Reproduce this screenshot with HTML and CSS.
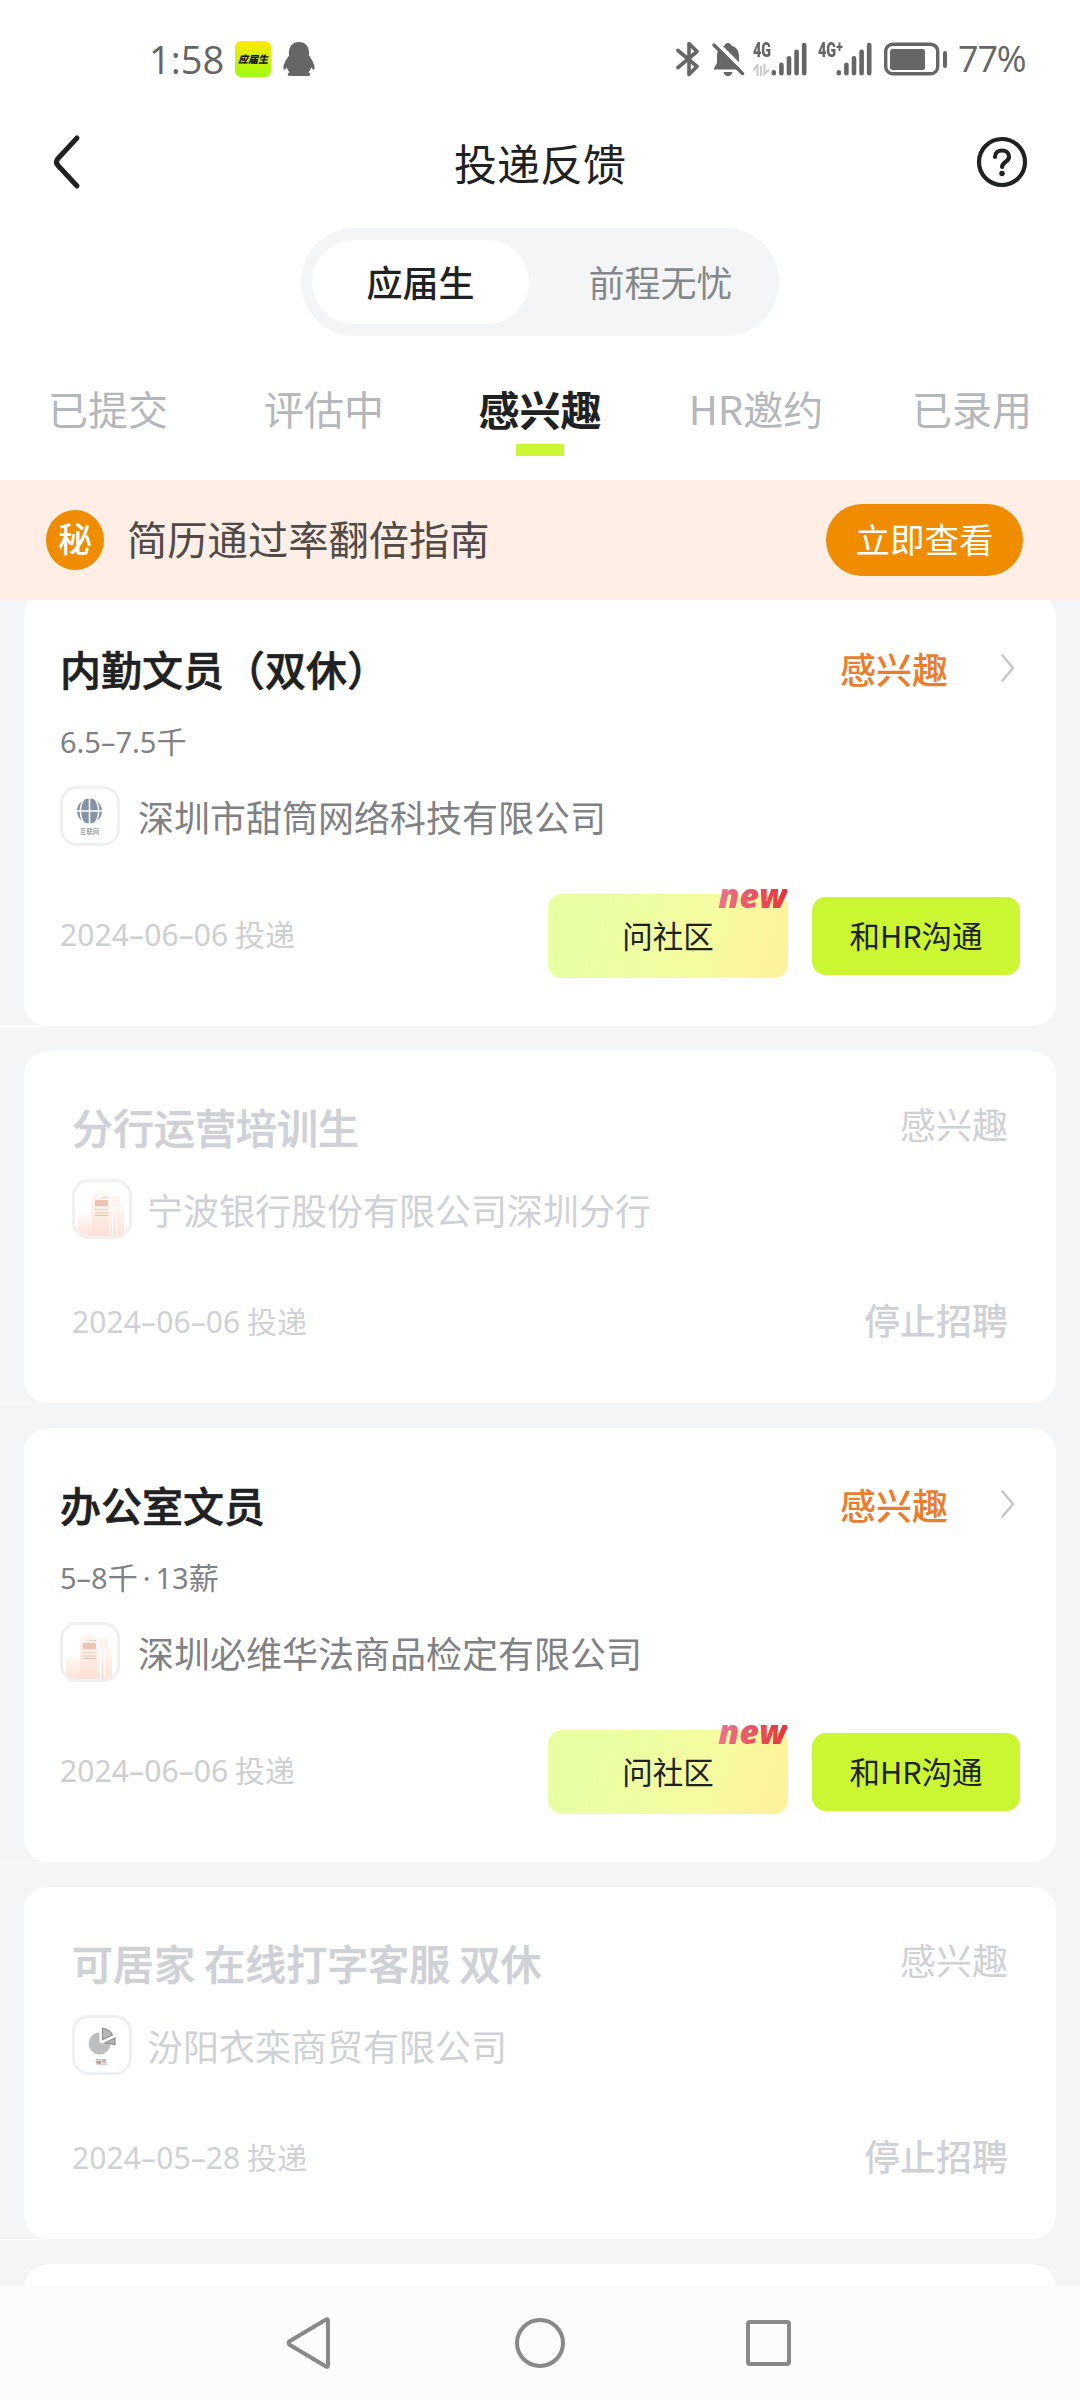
FILE: index.html
```html
<!DOCTYPE html>
<html lang="zh-CN">
<head>
<meta charset="utf-8">
<title>投递反馈</title>
<link rel="stylesheet" href="styles.css">
</head>
<body>
<svg class="defs" width="0" height="0" aria-hidden="true">
  <defs>
    <linearGradient id="peach" x1="0" y1="0" x2="0" y2="1"><stop offset="0" stop-color="#fff8f4"/><stop offset="1" stop-color="#fbdfd3"/></linearGradient>
    <symbol id="signal" viewBox="0 0 36 34">
      <g stroke="#666" stroke-width="4.600" stroke-linecap="round"><path d="M2.800 30.300v1M10.400 22.800v8.400M18 16.300v14.900M25.600 9.800v21.400M33.200 3v28.200"/></g>
    </symbol>
    <symbol id="building" viewBox="0 0 60 60">
      <rect x="6" y="36" width="16" height="24" fill="url(#peach)"/>
      <path d="M20 16l8-6 9 5v45H20z" fill="url(#peach)"/>
      <rect x="39" y="17" width="9" height="30" fill="#fff2ec"/>
      <rect x="38" y="26" width="14" height="34" fill="url(#peach)"/>
      <path d="M40.500 28v32M45 28v32M49.500 28v32" stroke="#fff" stroke-width="1"/>
      <rect x="23" y="21" width="13" height="6" fill="#edc3b4"/>
      <path d="M23 34h13M23 36.500h13" stroke="#ecc4b6" stroke-width="1"/>
      <path d="M30 18.500h6M23 30.500h13" stroke="#e3c2b6" stroke-width="1" stroke-dasharray="1.500 1"/>
    </symbol>
    <symbol id="chevron" viewBox="0 0 18 30"><path d="M3.500 2.500L14 15 3.500 27.500" fill="none" stroke="#c6c8cb" stroke-width="2.600" stroke-linecap="round" stroke-linejoin="round"/></symbol>
  </defs>
</svg>

<header class="top">
  <div class="statusbar">
    <div class="statusbar-left">
      <span class="clock">1:58</span>
      <span class="app-icon">应届生</span>
      <svg class="penguin" viewBox="0 0 32 34"><path fill="#666" d="M16 0C9.500 0 6 4.500 6 10.500v3C4 16.500 0 22 .4 26.500c.2 2 1.600 1.700 3.400-1.200.5 2 1.500 3.700 2.800 4.900C4 31 4.200 34 7 34h18c2.800 0 3-3 .4-3.800 1.300-1.200 2.300-2.900 2.800-4.900 1.800 2.900 3.200 3.200 3.400 1.200C32 22 28 16.500 26 13.500v-3C26 4.500 22.500 0 16 0z"/></svg>
    </div>
    <div class="statusbar-right">
      <svg class="bt" viewBox="0 0 24 36"><path d="M2 9.500L21 25.500 13 33.500V2.500L21 10.500 2 26.500" fill="none" stroke="#666" stroke-width="3.600" stroke-linecap="round" stroke-linejoin="round"/></svg>
      <svg class="bell" viewBox="0 0 34 36"><path fill="#666" d="M17 2c2 0 3 1 3.400 2.600C25.500 6.200 28 10 28 15v7l3.500 6.500h-29L6 22v-7c0-5 2.500-8.800 7.600-10.400C14 3 15 2 17 2zM12.500 31h9c-.5 2.600-2 4-4.500 4s-4-1.400-4.500-4z"/><path d="M4.500.5l30 30" stroke="#fff" stroke-width="4"/><path d="M3 4l28.500 28.500" stroke="#666" stroke-width="3.400" stroke-linecap="round"/></svg>
      <div class="net net-a"><div class="net-label"><span>4G</span><svg viewBox="0 0 16 12"><path d="M0 7L4.500 1v11M8 2v10M11.500 0v10L16 5.500" fill="none" stroke="#ccc" stroke-width="2.200"/></svg></div><svg class="bars"><use href="#signal"/></svg></div>
      <div class="net net-b"><div class="net-label"><span>4G<sup>+</sup></span></div><svg class="bars"><use href="#signal"/></svg></div>
      <svg class="battery" viewBox="0 0 64 34"><rect x="1.700" y="2.200" width="52" height="29.500" rx="7" fill="none" stroke="#666" stroke-width="3.400"/><rect x="6" y="7" width="35" height="21" rx="2.500" fill="#666"/><rect x="59" y="9" width="4" height="17" rx="2" fill="#666"/></svg>
      <span class="percent">77%</span>
    </div>
  </div>

  <div class="titlebar">
    <svg class="back" viewBox="0 0 30 56"><path d="M26 4L7 24.500q-3.200 3.500 0 7L26 52" fill="none" stroke="#202122" stroke-width="5" stroke-linecap="round"/></svg>
    <h1>投递反馈</h1>
    <svg class="help" viewBox="0 0 52 52"><circle cx="26" cy="26" r="23" fill="none" stroke="#202122" stroke-width="4.200"/><path d="M19 21c0-4.200 3.200-6.500 7-6.500s7 2.500 7 6.200c0 5-6.700 5.300-7 10.300" fill="none" stroke="#202122" stroke-width="4.200" stroke-linecap="round"/><circle cx="26" cy="37.500" r="2.700" fill="#202122"/></svg>
  </div>

  <div class="switch"><span class="switch-item on">应届生</span><span class="switch-item">前程无忧</span></div>

  <nav class="tabs">
    <span class="tab">已提交</span><span class="tab">评估中</span><span class="tab current">感兴趣</span><span class="tab">HR邀约</span><span class="tab">已录用</span>
  </nav>
</header>

<div class="banner"><span class="secret">秘</span><span class="banner-text">简历通过率翻倍指南</span><span class="banner-btn">立即查看</span></div>

<main class="list">
  <article class="card">
    <div class="head"><h2>内勤文员（双休）</h2><span class="state">感兴趣</span><svg class="chev"><use href="#chevron"/></svg></div>
    <p class="salary"><span class="num">6.5–7.5</span>千</p>
    <div class="company">
      <span class="logo"><svg viewBox="0 0 60 60"><circle cx="29.500" cy="25" r="12.500" fill="#8693a4"/><g fill="none" stroke="#fff" stroke-width="1.500"><path d="M16 25h27M29.500 12v26M24.500 12c-5.500 8-5.500 18 0 26M34.500 12c5.500 8 5.500 18 0 26"/></g><text x="29.500" y="48" text-anchor="middle" font-size="6.500" fill="#777f8a">互联网</text></svg></span>
      <span>深圳市甜筒网络科技有限公司</span>
    </div>
    <div class="foot"><span class="date"><span class="num">2024–06–06</span> 投递</span><span class="ask">问社区<em>new</em></span><span class="chat">和HR沟通</span></div>
  </article>

  <article class="card closed">
    <div class="head"><h2>分行运营培训生</h2><span class="state">感兴趣</span></div>
    <div class="company"><span class="logo"><svg><use href="#building"/></svg></span><span>宁波银行股份有限公司深圳分行</span></div>
    <div class="foot"><span class="date"><span class="num">2024–06–06</span> 投递</span><span class="stopped">停止招聘</span></div>
  </article>

  <article class="card">
    <div class="head"><h2>办公室文员</h2><span class="state">感兴趣</span><svg class="chev"><use href="#chevron"/></svg></div>
    <p class="salary"><span class="num">5–8</span>千<span class="num dot">·</span><span class="num">13</span>薪</p>
    <div class="company"><span class="logo"><svg><use href="#building"/></svg></span><span>深圳必维华法商品检定有限公司</span></div>
    <div class="foot"><span class="date"><span class="num">2024–06–06</span> 投递</span><span class="ask">问社区<em>new</em></span><span class="chat">和HR沟通</span></div>
  </article>

  <article class="card closed">
    <div class="head"><h2>可居家 在线打字客服 双休</h2><span class="state">感兴趣</span></div>
    <div class="company">
      <span class="logo"><svg viewBox="0 0 60 60"><path d="M27.500 28V17.500A11 11 0 1 0 38.500 29.500z" fill="#bdbebf"/><path d="M30.500 24.500V13.500c4.500.3 8 2.500 10 6.500zM32.500 28l10.500-5v6.500z" fill="#b4b5b6" stroke="#8e8f90" stroke-width="1.200"/><text x="29.500" y="48.500" text-anchor="middle" font-size="6" fill="#777">销售</text></svg></span>
      <span>汾阳衣栾商贸有限公司</span>
    </div>
    <div class="foot"><span class="date"><span class="num">2024–05–28</span> 投递</span><span class="stopped">停止招聘</span></div>
  </article>

  <article class="card"></article>
</main>

<footer class="navbar">
  <svg viewBox="0 0 54 54"><path d="M6 25L42 3.500q2-1 2 1.200v44.600q0 2.200-2 1.200L6 29q-3-2 0-4z" fill="none" stroke="#898989" stroke-width="4"/></svg>
  <svg viewBox="0 0 54 54"><circle cx="27" cy="27" r="23" fill="none" stroke="#898989" stroke-width="4"/></svg>
  <svg viewBox="0 0 54 54"><rect x="6" y="6" width="41" height="42" rx="2" fill="none" stroke="#898989" stroke-width="4"/></svg>
</footer>
</body>
</html>
```
FILE: styles.css
```css
* { box-sizing: border-box; }

body {
  margin: 0;
  width: 1080px;
  height: 2400px;
  overflow: hidden;
  display: flex;
  flex-direction: column;
  background: #f3f5f7;
  color: #202122;
  font-family: "Noto Sans CJK SC", sans-serif;
  font-size: 36px;
  line-height: 1;
}

h1, h2, p { margin: 0; font-weight: 400; }
svg { display: block; flex: none; }
.defs { position: absolute; }
.num { font-family: "Noto Sans", "Noto Sans CJK SC", sans-serif; }

/* top area */
.top { height: 480px; flex: none; background: #fff; }

.statusbar {
  display: flex;
  justify-content: space-between;
  height: 100px;
  padding: 18px 55px 0 149px;
  color: #666;
  font-family: "Open Sans", "Noto Sans CJK SC", sans-serif;
}
.statusbar-left, .statusbar-right { display: flex; align-items: center; height: 82px; }
.clock { width: 86px; font-size: 38px; line-height: 86px; }
.app-icon {
  width: 36px;
  height: 36px;
  border-radius: 6px;
  background: linear-gradient(#ffe900, #a0fb13);
  color: #111;
  font: italic 900 10px/36px "Noto Sans CJK SC", sans-serif;
  text-align: center;
  white-space: nowrap;
}
.penguin { width: 32px; height: 34px; margin-left: 12px; }
.bt { width: 24px; height: 36px; margin-right: 11px; }
.bell { width: 34px; height: 36px; margin-right: 8px; }
.net { display: flex; height: 34px; }
.net-label {
  display: flex;
  flex-direction: column;
  justify-content: space-between;
  width: 18px;
  height: 34px;
  font: 900 20px/17px "Roboto", sans-serif;
}
.net-label span { display: block; transform: scaleX(.72); transform-origin: left; white-space: nowrap; }
.net-label sup { font-size: 17px; line-height: 0; vertical-align: 5px; }
.net-label svg { width: 16px; height: 12px; }
.bars { width: 36px; height: 34px; }
.net-a { margin-right: 11px; }
.net-b { margin-right: 12px; }
.battery { width: 64px; height: 34px; margin-right: 10px; }
.percent { font-size: 36px; line-height: 84px; width: 67px; letter-spacing: -1.2px; }

.titlebar {
  display: flex;
  align-items: center;
  justify-content: space-between;
  height: 124px;
  padding: 0 52px 0 51px;
}
.back { width: 30px; height: 56px; margin-right: 23px; }
.titlebar h1 { font-size: 43px; }
.help { width: 52px; height: 52px; }

.switch {
  display: flex;
  width: 478px;
  height: 108px;
  margin: 4px auto 0;
  padding: 12px 11px;
  border-radius: 54px;
  background: #f3f5f7;
}
.switch-item { flex: 1; padding-left: 24px; color: #85888b; line-height: 83px; text-align: center; }
.switch-item.on { flex: 0 0 217px; padding-left: 0; border-radius: 42px; background: #fff; color: #202122; font-weight: 500; }

.tabs { display: grid; grid-template-columns: repeat(5, 1fr); margin-top: 36px; height: 84px; }
.tab {
  display: flex;
  flex-direction: column;
  align-items: center;
  color: #b4b7bb;
  font-size: 40px;
  line-height: 72px;
}
.tab.current { color: #202122; font-weight: 700; font-size: 41px; }
.tab.current::after { content: ""; width: 48px; height: 12px; background: #cbf632; }

.banner {
  display: flex;
  align-items: center;
  flex: none;
  height: 120px;
  padding: 0 57px 0 46px;
  background: #feeee5;
}
.secret {
  width: 58px;
  height: 60px;
  border-radius: 50%;
  background: #ef8c00;
  color: #fff;
  font-size: 34px;
  font-weight: 500;
  line-height: 56px;
  text-align: center;
}
.banner-text { flex: 1; margin: -3px 0 0 23px; color: #514b48; font-size: 40.3px; }
.banner-btn {
  width: 197px;
  height: 72px;
  border-radius: 36px;
  background: #ef8c00;
  color: #fff;
  font-size: 34.5px;
  line-height: 68px;
  text-align: center;
}

/* applications */
.list {
  display: flex;
  flex-direction: column;
  flex: none;
  height: 1686px;
  overflow: hidden;
}
.card {
  position: relative;
  flex: none;
  width: 1032px;
  height: 434px;
  margin: 0 24px 25px;
  padding: 46px 36px 0;
  border-radius: 24px;
  background: #fff;
}
.card::after {
  content: "";
  position: absolute;
  left: -24px;
  bottom: -1px;
  width: 48px;
  height: 1px;
  background: #fff;
}
.card:first-child { margin-top: -8px; }
.head { display: flex; align-items: center; height: 60px; }
.head h2 { flex: 1; font-size: 41px; font-weight: 500; -webkit-text-stroke: .6px currentColor; }
.state { color: #ea7d2e; font-weight: 500; font-size: 36px; }
.chev { width: 18px; height: 30px; margin: 0 3px 0 51px; }
.salary { margin-top: 16px; height: 52px; color: #7f8184; font-size: 30px; line-height: 52px; }
.salary .num { font-size: 29px; }
.salary .dot { margin: 0 5px; }
.company { display: flex; align-items: center; gap: 18px; height: 60px; margin-top: 20px; color: #7f8184; }
.logo { width: 60px; height: 60px; flex: none; border: 3px solid #eef0f2; border-radius: 17px; overflow: hidden; }
.logo svg { width: 60px; height: 60px; margin: -3px; }
.foot { display: flex; align-items: center; height: 84px; margin-top: 48px; }
.date { flex: 1; margin-top: -4px; color: #cdcfd1; font-size: 30px; white-space: nowrap; }
.date .num { letter-spacing: .1px; }
.ask, .chat { color: #202122; font-size: 30.5px; text-align: center; }
.ask {
  position: relative;
  width: 240px;
  height: 84px;
  border-radius: 14px;
  background: linear-gradient(110deg, #e9ffa4 20%, #f5fba0 65%, #fff19c);
  line-height: 82px;
}
.ask em {
  position: absolute;
  right: 1px;
  top: -17px;
  color: transparent;
  background: linear-gradient(90deg, #ec7390, #e9333c);
  background-clip: text;
  font: italic 800 34px/36px "Open Sans", sans-serif;
}
.chat { width: 208px; height: 78px; margin-left: 24px; border-radius: 14px; background: #cbf632; line-height: 76px; }

.card.closed { height: 352px; padding: 45px 48px 0; color: #cfd1d6; }
.closed .state { color: #cfd1d6; font-weight: 400; margin-top: -6px; }
.closed .company { margin-top: 23px; gap: 15px; color: #cfd1d6; }
.closed .date { margin-top: 0; color: #cfd1d6; }
.closed .foot { margin-top: 40px; }
.stopped { margin-top: -4px; font-weight: 500; }

.navbar {
  display: flex;
  justify-content: center;
  gap: 175px;
  flex: 1;
  padding-top: 30px;
  background: #fcfcfc;
}
.navbar svg { width: 54px; height: 54px; }
```
